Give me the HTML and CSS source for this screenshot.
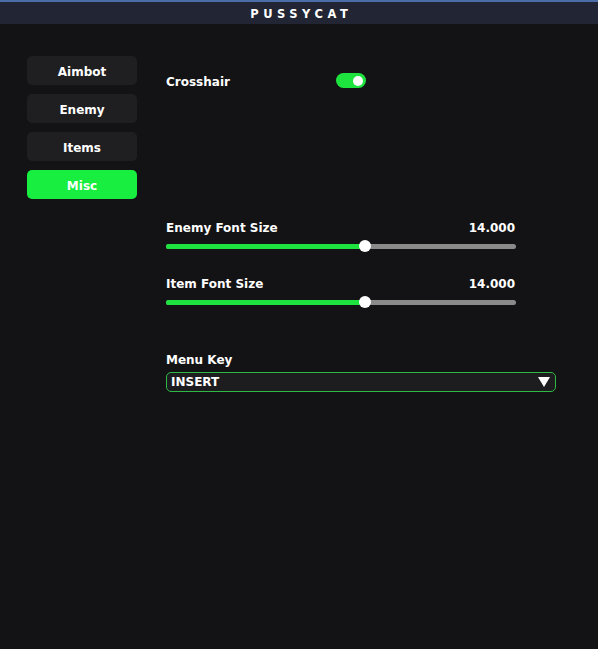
FILE: index.html
```html
<!DOCTYPE html>
<html>
<head>
<meta charset="utf-8">
<link rel="stylesheet" href="styles.css">
</head>
<body>
<div class="window">
  <div class="titlebar">PUSSYCAT</div>
  <div class="main">
    <nav class="sidebar">
      <div class="tab">Aimbot</div>
      <div class="tab">Enemy</div>
      <div class="tab">Items</div>
      <div class="tab active">Misc</div>
    </nav>
    <section class="content">
      <div class="toggle-row">
        <span class="label">Crosshair</span>
        <span class="toggle"><span class="knob"></span></span>
      </div>
      <div class="slider-group first">
        <div class="slider-head"><span>Enemy Font Size</span><span>14.000</span></div>
        <div class="slider"><div class="fill" style="width:56.9%"></div><div class="thumb" style="left:56.9%"></div></div>
      </div>
      <div class="slider-group">
        <div class="slider-head"><span>Item Font Size</span><span>14.000</span></div>
        <div class="slider"><div class="fill" style="width:56.9%"></div><div class="thumb" style="left:56.9%"></div></div>
      </div>
      <div class="combo-group">
        <div class="label">Menu Key</div>
        <div class="combo"><span>INSERT</span><span class="arrow"></span></div>
      </div>
    </section>
  </div>
</div>
</body>
</html>
```
FILE: styles.css
```css
* { box-sizing: border-box; }
html, body { margin: 0; padding: 0; background: #131315; }
body {
  font-family: "DejaVu Sans", Verdana, sans-serif;
  font-weight: bold;
  font-size: 12px;
  color: #ffffff;
}
.window {
  width: 598px;
  height: 649px;
  background: #131315;
  border-top: 2px solid #4b6ea8;
  border-radius: 0 0 6px 6px;
  overflow: hidden;
}
.titlebar {
  height: 22px;
  background: #222533;
  display: flex;
  align-items: center;
  justify-content: center;
  font-size: 11.5px;
  letter-spacing: 4.5px;
  padding-left: 4.5px;
  padding-top: 2px;
  line-height: 20px;
}
.main {
  display: flex;
}
.sidebar {
  padding: 32px 0 0 27px;
  display: flex;
  flex-direction: column;
  gap: 9px;
  width: 166px;
}
.tab {
  width: 110px;
  height: 29px;
  border-radius: 5px;
  background: #1f1f21;
  display: flex;
  align-items: center;
  justify-content: center;
  padding-top: 3px;
}
.tab.active {
  background: #17ee3f;
}
.content {
  padding-top: 49px;
  display: flex;
  flex-direction: column;
}
.toggle-row {
  width: 200px;
  height: 15px;
  display: flex;
  align-items: center;
  justify-content: space-between;
}
.label { line-height: 15px; }
.toggle-row .label { padding-top: 3px; }
.combo-group .label { padding-top: 1px; }
.toggle {
  width: 30px;
  height: 15px;
  border-radius: 8px;
  background: #1ee33f;
  display: flex;
  align-items: center;
  justify-content: flex-end;
  padding-right: 3px;
}
.knob {
  width: 10px;
  height: 10px;
  border-radius: 50%;
  background: #ffffff;
}
.slider-group {
  width: 350px;
  margin-top: 24px;
  display: flex;
  flex-direction: column;
  gap: 5px;
}
.slider-group.first { margin-top: 132px; }
.slider-head {
  display: flex;
  justify-content: space-between;
  line-height: 15px;
  height: 15px;
  padding: 1px 1px 0 0;
}
.slider {
  position: relative;
  height: 12px;
}
.slider::before {
  content: "";
  position: absolute;
  left: 0; right: 0;
  top: 3.5px;
  height: 5px;
  border-radius: 3px;
  background: #8a8a8a;
}
.fill {
  position: absolute;
  left: 0;
  top: 3.5px;
  height: 5px;
  border-radius: 3px 0 0 3px;
  background: #1ee33f;
}
.thumb {
  position: absolute;
  top: 0;
  width: 12px;
  height: 12px;
  margin-left: -6px;
  border-radius: 50%;
  background: #ffffff;
}
.combo-group {
  margin-top: 44px;
  display: flex;
  flex-direction: column;
  gap: 4px;
}
.combo {
  width: 390px;
  height: 20px;
  border: 1px solid #2fb843;
  border-radius: 5px;
  background: #1d1d1f;
  display: flex;
  align-items: center;
  justify-content: space-between;
  padding: 0 5px 0 4px;
}
.arrow {
  width: 0;
  height: 0;
  border-left: 6px solid transparent;
  border-right: 6px solid transparent;
  border-top: 10px solid #ffffff;
}
```
